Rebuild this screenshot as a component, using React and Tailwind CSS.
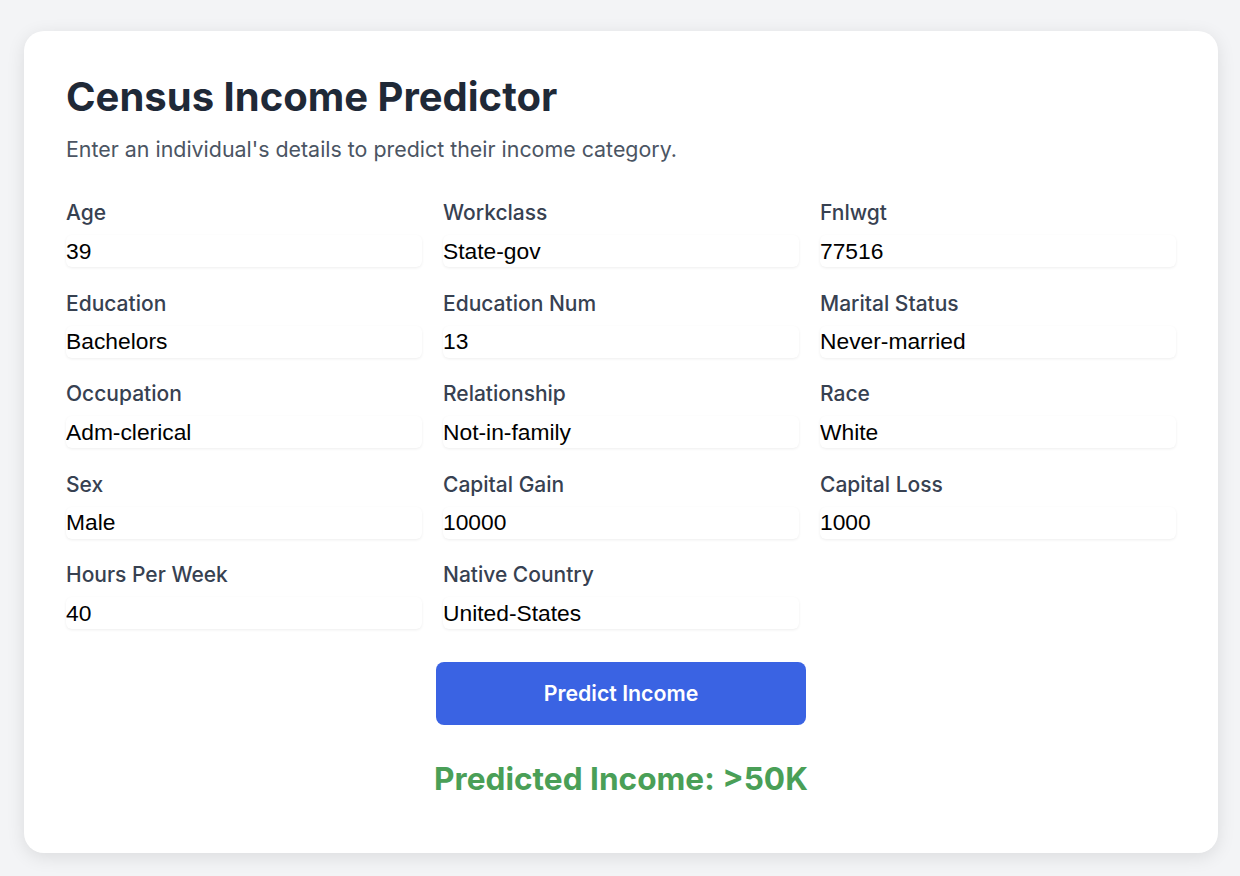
import { useState } from 'react'

const FIELDS = [
  ['age', 'Age', '39'],
  ['workclass', 'Workclass', 'State-gov'],
  ['fnlwgt', 'Fnlwgt', '77516'],
  ['education', 'Education', 'Bachelors'],
  ['education_num', 'Education Num', '13'],
  ['marital_status', 'Marital Status', 'Never-married'],
  ['occupation', 'Occupation', 'Adm-clerical'],
  ['relationship', 'Relationship', 'Not-in-family'],
  ['race', 'Race', 'White'],
  ['sex', 'Sex', 'Male'],
  ['capital_gain', 'Capital Gain', '10000'],
  ['capital_loss', 'Capital Loss', '1000'],
  ['hours_per_week', 'Hours Per Week', '40'],
  ['native_country', 'Native Country', 'United-States'],
]

export default function App() {
  const [form, setForm] = useState(() =>
    Object.fromEntries(FIELDS.map(([key, , value]) => [key, value]))
  )
  const [result] = useState('>50K')

  return (
    <div className="min-h-screen bg-[#f3f4f6] pl-6 pr-[22px] pt-[31px] pb-6 font-['Inter',sans-serif]">
      <div className="rounded-[20px] bg-white px-[42px] pt-[42px] pb-[54px] shadow-[0_4px_18px_rgba(0,0,0,0.10)]">
        <h1 className="text-[40px] leading-[48px] font-bold text-[#1f2937]">Census Income Predictor</h1>
        <p className="mt-[14px] text-[21.4px] leading-[28px] text-[#4b5563]">
          Enter an individual's details to predict their income category.
        </p>

        <div className="mt-[36px] grid grid-cols-3 gap-x-[21px] gap-y-[22.5px]">
          {FIELDS.map(([key, label]) => (
            <div key={key} className="flex flex-col gap-[8px]">
              <label htmlFor={key} className="text-[21px] leading-[28px] font-medium text-[#374151]">
                {label}
              </label>
              <input
                id={key}
                value={form[key]}
                onChange={(e) => setForm((f) => ({ ...f, [key]: e.target.value }))}
                className="h-[32px] rounded-[6px] bg-white px-0 font-['Liberation_Sans',Arial,sans-serif] text-[22.8px] text-black shadow-[0_1px_3px_rgba(0,0,0,0.07)] outline-none"
              />
            </div>
          ))}
        </div>

        <div className="mt-[33px] flex flex-col items-center">
          <button
            type="button"
            className="h-[63px] w-[370px] rounded-[8px] bg-[#3a63e3] text-[21.3px] font-semibold text-white"
          >
            Predict Income
          </button>
          <p className="mt-[34px] text-[31.6px] leading-[40px] font-bold text-[#4a9f57]">
            Predicted Income: {result}
          </p>
        </div>
      </div>
    </div>
  )
}
